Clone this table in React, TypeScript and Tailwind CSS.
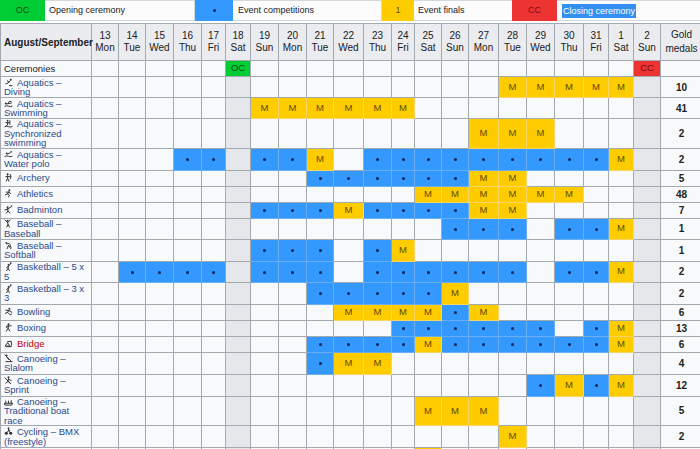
import type { ReactNode } from 'react';

const d = (n: number) => '.'.repeat(n);

const DAYS: [string, string][] = [
  ['13', 'Mon'], ['14', 'Tue'], ['15', 'Wed'], ['16', 'Thu'], ['17', 'Fri'], ['18', 'Sat'],
  ['19', 'Sun'], ['20', 'Mon'], ['21', 'Tue'], ['22', 'Wed'], ['23', 'Thu'], ['24', 'Fri'],
  ['25', 'Sat'], ['26', 'Sun'], ['27', 'Mon'], ['28', 'Tue'], ['29', 'Wed'], ['30', 'Thu'],
  ['31', 'Fri'], ['1', 'Sat'], ['2', 'Sun'],
];

// label col, 21 days, gold medals
const WIDTHS = [91, 27, 27, 28, 28, 24, 25, 28, 28, 27, 30, 28, 23, 27, 27, 30, 28, 28, 29, 25, 25, 27, 42];

type Row = { lines: string[]; icon?: string; cells: string; gold?: string; h: string; red?: boolean };

const ROWS: Row[] = [
  { lines: ['Ceremonies'], cells: d(5) + 'O' + d(14) + 'C', h: 'h-[16px]' },
  { lines: ['Aquatics –', 'Diving'], icon: 'diving', cells: d(15) + 'MMMMM' + d(1), gold: '10', h: 'h-[21px]' },
  { lines: ['Aquatics –', 'Swimming'], icon: 'swim', cells: d(6) + 'MMMMMM' + d(9), gold: '41', h: 'h-[21px]' },
  { lines: ['Aquatics –', 'Synchronized', 'swimming'], icon: 'sync', cells: d(14) + 'MMM' + d(4), gold: '2', h: 'h-[27px]' },
  { lines: ['Aquatics –', 'Water polo'], icon: 'polo', cells: '...bb.' + 'bbM.' + 'bbbbbbbbb' + 'M.', gold: '2', h: 'h-[22px]' },
  { lines: ['Archery'], icon: 'archery', cells: d(8) + 'bbbbbbMM' + d(5), gold: '5', h: 'h-[16px]' },
  { lines: ['Athletics'], icon: 'run', cells: d(12) + 'MMMMMM' + d(3), gold: '48', h: 'h-[16px]' },
  { lines: ['Badminton'], icon: 'badminton', cells: d(6) + 'bbbMbbbbMM' + d(5), gold: '7', h: 'h-[15px]' },
  { lines: ['Baseball –', 'Baseball'], icon: 'baseball', cells: d(13) + 'bbb.bbM' + d(1), gold: '1', h: 'h-[21px]' },
  { lines: ['Baseball –', 'Softball'], icon: 'softball', cells: d(6) + 'bbb.bM' + d(9), gold: '1', h: 'h-[22px]' },
  { lines: ['Basketball – 5 x', '5'], icon: 'basket', cells: '.bbbb.' + 'bbb.' + 'bbbbbb' + '.bbM.', gold: '2', h: 'h-[21px]' },
  { lines: ['Basketball – 3 x', '3'], icon: 'basket', cells: d(8) + 'bbbbbM' + d(7), gold: '2', h: 'h-[22px]' },
  { lines: ['Bowling'], icon: 'bowling', cells: d(9) + 'MMMMbM' + d(6), gold: '6', h: 'h-[15px]' },
  { lines: ['Boxing'], icon: 'boxing', cells: d(11) + 'bbbbbb.bM' + d(1), gold: '13', h: 'h-[16px]' },
  { lines: ['Bridge'], icon: 'bridge', cells: d(8) + 'bbbbMbbbbbbM' + d(1), gold: '6', h: 'h-[16px]', red: true },
  { lines: ['Canoeing –', 'Slalom'], icon: 'slalom', cells: d(8) + 'bMM' + d(10), gold: '4', h: 'h-[22px]' },
  { lines: ['Canoeing –', 'Sprint'], icon: 'sprint', cells: d(16) + 'bMbM' + d(1), gold: '12', h: 'h-[22px]' },
  { lines: ['Canoeing –', 'Traditional boat', 'race'], icon: 'boat', cells: d(12) + 'MMM' + d(6), gold: '5', h: 'h-[28px]' },
  { lines: ['Cycling – BMX', '(freestyle)'], icon: 'bmx', cells: d(15) + 'M' + d(5), gold: '2', h: 'h-[22px]' },
  { lines: [], cells: d(12) + 'M' + d(8), h: 'h-[22px]' },
];

function Pict({ name }: { name: string }) {
  let body: ReactNode;
  switch (name) {
    case 'diving':
      body = <><circle cx="7.5" cy="2" r="1.1" /><path d="M7 3 L4.5 5.5 L2 6.5 M5.5 4.5 L3.5 3" /><path d="M6 8.5 L9 8.5" /></>;
      break;
    case 'swim':
      body = <><circle cx="2" cy="5" r="1.1" /><path d="M3 5.5 L8 4.5 M4.5 5 L6 2.5 L8 3" /><path d="M1 8 Q3 7 5 8 T9 8" /></>;
      break;
    case 'sync':
      body = <><circle cx="4" cy="1.8" r="1" /><path d="M4 3 L4 6 M2 4 L6 4 M4 6 L2.5 8 M6.5 2 L6.5 6" /><path d="M1 8.5 Q3 7.5 5 8.5 T9 8.5" /></>;
      break;
    case 'polo':
      body = <><circle cx="3" cy="4" r="1.1" /><circle cx="8" cy="2" r="0.9" /><path d="M4 4.5 L7 3 M1 7 Q3 6 5 7 T9 7" /></>;
      break;
    case 'archery':
      body = <><circle cx="4" cy="1.5" r="1.1" /><path d="M4 3 L4 6 L2.5 9 M4 6 L5.5 9 M2 4 L7 4 M7 1.5 Q9 4 7 6.5" /></>;
      break;
    case 'run':
      body = <><circle cx="6" cy="1.5" r="1.1" /><path d="M5.5 3 L4 5.5 L6 7 L5 9 M4 5.5 L1.5 6.5 M5 3.5 L7.5 5 M5 3.5 L2.5 3.5" /></>;
      break;
    case 'badminton':
      body = <><circle cx="4" cy="2.5" r="1.1" /><path d="M4 4 L4.5 6.5 L2.5 9 M4.5 6.5 L6.5 9 M4 4.5 L8 2 M4 4.5 L1 5.5" /><circle cx="8.5" cy="1.2" r="0.8" /></>;
      break;
    case 'baseball':
      body = <><circle cx="4" cy="2" r="1.1" /><path d="M4 3.5 L4.5 6 L3 9 M4.5 6 L6 9 M4 4 L7 1 M1 1 L3 3" /></>;
      break;
    case 'softball':
      body = <><circle cx="2.5" cy="2" r="1" /><path d="M3 3 Q6 2 7 4 Q6 6 8 7 M5 5 L3.5 8.5 M5 5 L7.5 8.5" /></>;
      break;
    case 'basket':
      body = <><circle cx="7.5" cy="1.2" r="1" /><circle cx="5" cy="3" r="1" /><path d="M5 4.5 L4.5 7 L3 9.5 M4.5 7 L6 9.5 M5 4.5 L7 2.5 M4.5 5 L3 6" /></>;
      break;
    case 'bowling':
      body = <><circle cx="6" cy="2" r="1.1" /><path d="M5.5 3.5 L4 6 L1.5 7 M4 6 L6.5 8.5 L8 8.5 M5 4 L8 5 M5 4 L2 3.5" /><circle cx="8.5" cy="6.5" r="0.8" /></>;
      break;
    case 'boxing':
      body = <><circle cx="5" cy="1.5" r="1.1" /><path d="M5 3 L4.5 6 L2.5 9 M4.5 6 L6.5 9 M5 3.5 L8 3 M5 3.5 L2.5 5 L3.5 3" /></>;
      break;
    case 'bridge':
      body = <><path d="M1.5 7.5 L4 4 L6.5 7.5 Z M4 3 L8 2.5 L8.5 7 M3 8.5 L8 8.5" /></>;
      break;
    case 'slalom':
      body = <><circle cx="3" cy="1.5" r="1" /><path d="M3 3 L5 6 M1 1 L8 8 M2 8.5 L9 8.5" /></>;
      break;
    case 'sprint':
      body = <><circle cx="5" cy="1.5" r="1.1" /><path d="M5 3 L4.5 6 L2 8 M4.5 6 L6.5 8 M5 3.5 L8 5 M1 2 L7.5 8.5" /></>;
      break;
    case 'boat':
      body = <><path d="M0.5 7 L9.5 7 L8.5 9 L1.5 9 Z M2 6.5 L2 4.5 M5 6.5 L5 4.5 M8 6.5 L8 4" /></>;
      break;
    case 'bmx':
      body = <><circle cx="2.5" cy="7" r="1.7" /><circle cx="7.5" cy="7" r="1.7" /><circle cx="5" cy="1.2" r="1" /><path d="M2.5 7 L5 4 L7.5 7 M5 2.5 L5 4 L6.5 3.5" /></>;
      break;
    default:
      body = null;
  }
  return (
    <svg viewBox="0 0 10 10" className="mr-[4px] inline-block h-[9px] w-[9px] align-[-1px] fill-none stroke-[#333] text-[#333] [&_circle]:fill-[#333] [&_circle]:stroke-none" strokeWidth={1.1} strokeLinecap="round" strokeLinejoin="round">
      {body}
    </svg>
  );
}

function Dot() {
  return <span className="inline-block h-[3px] w-[3px] rounded-full bg-[#0c2350] align-middle" />;
}

function Cell({ v, gray }: { v: string; gray: boolean }) {
  if (v === 'b') return <td className="border border-[#6aaef2] bg-[#3399ff] text-center leading-none"><Dot /></td>;
  if (v === 'M') return <td className="border border-[#f7d560] bg-[#ffcc00] text-center text-[#5c4a00]">M</td>;
  if (v === 'O') return <td className="border border-[#a2a9b1] bg-[#00cc33] text-center text-[#0d4a1c]">OC</td>;
  if (v === 'C') return <td className="border border-[#a2a9b1] bg-[#ee3333] text-center text-[#6e1010]">CC</td>;
  if (gray) return <td className="border border-[#a2a9b1] bg-[#e6e7ea]" />;
  return <td className="border border-[#a2a9b1] bg-[#f8f9fa]" />;
}

function Legend() {
  return (
    <div className="mb-[2px] flex h-[21px] items-stretch text-[9px] text-[#202122]">
      <div className="flex w-[45px] items-center justify-center bg-[#00cc33] text-[#0d4a1c]">OC</div>
      <div className="flex w-[150px] items-center border-y border-r border-[#d4d7db] bg-[#fcfcfd] pl-[4px]">Opening ceremony</div>
      <div className="flex w-[38px] items-center justify-center bg-[#3399ff]"><Dot /></div>
      <div className="flex w-[149px] items-center border-y border-r border-[#d4d7db] bg-[#fcfcfd] pl-[5px]">Event competitions</div>
      <div className="flex w-[32px] items-center justify-center bg-[#ffcc00] text-[#5c4a00]">1</div>
      <div className="flex w-[98px] items-center border-y border-[#d4d7db] bg-[#fcfcfd] pl-[4px]">Event finals</div>
      <div className="flex w-[45px] items-center justify-center bg-[#ee3333] text-[#6e1010]">CC</div>
      <div className="flex flex-1 items-center border-y border-[#d4d7db] bg-[#fcfcfd] pl-[5px]">
        <span className="bg-[#3390f0] px-[1px] leading-[14px] text-white">Closing ceremony</span>
      </div>
    </div>
  );
}

export default function App() {
  return (
    <div className="h-[449px] w-[700px] overflow-hidden bg-white font-['Liberation_Sans',Arial,sans-serif] text-[9.5px] text-[#202122]">
      <Legend />
      <table className="w-[702px] table-fixed border-collapse">
        <colgroup>
          {WIDTHS.map((w, i) => (
            <col key={i} style={{ width: w }} />
          ))}
        </colgroup>
        <thead>
          <tr className="h-[37px]">
            <th className="border border-[#a2a9b1] bg-[#eaecf0] px-[3px] text-left text-[10px] font-bold">August/September</th>
            {DAYS.map(([n, name], i) => (
              <th key={i} className="border border-[#a2a9b1] bg-[#eaecf0] p-0 text-center text-[10px] leading-[12px] font-normal">
                {n}
                <br />
                {name}
              </th>
            ))}
            <th className="border border-[#a2a9b1] bg-[#eaecf0] p-0 text-center text-[10px] leading-[14px] font-normal">
              Gold
              <br />
              medals
            </th>
          </tr>
        </thead>
        <tbody>
          {ROWS.map((r, ri) => (
            <tr key={ri} className={r.h}>
              <td className={`overflow-visible border border-[#a2a9b1] bg-[#f8f9fa] px-[3px] py-0 align-middle leading-[9.5px] whitespace-nowrap ${r.red ? 'text-[#ba0000]' : r.icon ? 'text-[#2a4b8d]' : 'text-[#202122]'}`}>
                {r.lines.map((l, li) => (
                  <div key={li}>
                    {li === 0 && r.icon && <Pict name={r.icon} />}
                    {l}
                  </div>
                ))}
              </td>
              {r.cells.split('').map((v, ci) => (
                <Cell key={ci} v={v} gray={ci === 5 || ci === 20} />
              ))}
              <td className="border border-[#a2a9b1] bg-[#f8f9fa] text-center text-[10px] font-bold">{r.gold ?? ''}</td>
            </tr>
          ))}
        </tbody>
      </table>
    </div>
  );
}
